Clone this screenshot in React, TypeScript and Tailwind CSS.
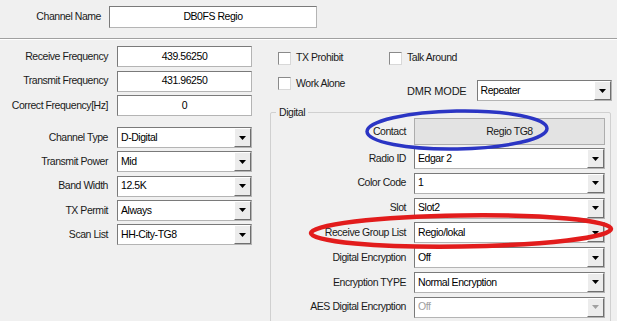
// Kanal-Editor (CPS) – DMR Kanaleinstellungen
const font = { fontFamily: '"Liberation Sans", Arial, sans-serif' }

function TextBox({ value, className = '' }: { value: string; className?: string }) {
  return (
    <div
      className={`h-[21px] bg-white border border-[#b4b4b4] border-t-[#7a7a7a] border-l-[#7a7a7a] flex items-center justify-center text-black ${className}`}
    >
      {value}
    </div>
  )
}

function Select({ value, disabled = false, className = '' }: { value: string; disabled?: boolean; className?: string }) {
  return (
    <div
      className={`h-[21px] bg-white border border-[#b4b4b4] border-t-[#7a7a7a] border-l-[#7a7a7a] flex items-stretch ${className}`}
    >
      <span className={`flex-1 flex items-center pl-[3px] ${disabled ? 'text-[#a0a0a0]' : 'text-black'}`}>{value}</span>
      <span className="w-[17px] bg-[#ececec] border-l border-t border-white border-r border-b border-r-[#6f6f6f] border-b-[#6f6f6f] flex items-center justify-center">
        <svg width="7" height="4" viewBox="0 0 7 4">
          <path d="M0 0h7L3.5 4z" fill={disabled ? '#a0a0a0' : '#000'} />
        </svg>
      </span>
    </div>
  )
}

function Check({ label, className = '' }: { label: string; className?: string }) {
  return (
    <div className={`flex items-center gap-[5px] ${className}`}>
      <span className="w-[13px] h-[13px] bg-white border border-[#8a8a8a] border-b-[#d8d8d8] border-r-[#d8d8d8]" />
      <span>{label}</span>
    </div>
  )
}

function Row({ label, children, labelW }: { label: string; children: React.ReactNode; labelW: string }) {
  return (
    <div className="flex items-center h-[21px]">
      <span className={`${labelW} text-right shrink-0`}>{label}</span>
      {children}
    </div>
  )
}

export default function App() {
  const left = [
    ['Channel Type', 'D-Digital'],
    ['Transmit Power', 'Mid'],
    ['Band Width', '12.5K'],
    ['TX Permit', 'Always'],
    ['Scan List', 'HH-City-TG8'],
  ]
  const digital: [string, string, boolean?][] = [
    ['Radio ID', 'Edgar 2'],
    ['Color Code', '1'],
    ['Slot', 'Slot2'],
    ['Receive Group List', 'Regio/lokal'],
    ['Digital Encryption', 'Off'],
    ['Encryption TYPE', 'Normal Encryption'],
    ['AES Digital Encryption', 'Off', true],
  ]

  return (
    <div
      style={font}
      className="relative w-[617px] h-[321px] overflow-hidden bg-[#f0f0f0] text-[10.5px] tracking-[-0.45px] text-[#1a1a1a] select-none"
    >
      {/* Kanalname */}
      <div className="h-[38px] flex pt-[6px]">
        <span className="w-[101px] h-[22px] text-right flex items-center justify-end shrink-0">Channel Name</span>
        <TextBox value="DB0FS Regio" className="ml-[8px] w-[208px] h-[22px]" />
      </div>
      <div className="border-t border-[#a0a0a0] border-b border-b-white" />

      <div className="flex">
        {/* linke Spalte */}
        <div className="w-[270px] shrink-0 pt-[6px] flex flex-col">
          <div className="flex flex-col gap-[3.5px]">
            <Row label="Receive Frequency" labelW="w-[108px]">
              <TextBox value="439.56250" className="ml-[9px] w-[135px]" />
            </Row>
            <Row label="Transmit Frequency" labelW="w-[108px]">
              <TextBox value="431.96250" className="ml-[9px] w-[135px]" />
            </Row>
            <Row label="Correct Frequency[Hz]" labelW="w-[108px]">
              <TextBox value="0" className="ml-[9px] w-[135px]" />
            </Row>
          </div>
          <div className="flex flex-col gap-[3.3px] mt-[11px]">
            {left.map(([l, v]) => (
              <Row key={l} label={l} labelW="w-[108px]">
                <Select value={v} className="ml-[9px] w-[135px]" />
              </Row>
            ))}
          </div>
        </div>

        {/* rechte Spalte */}
        <div className="flex-1 flex flex-col">
          <div className="flex mt-[11px] h-[14px]">
            <Check label="TX Prohibit" className="ml-[8px] w-[111px]" />
            <Check label="Talk Around" />
          </div>
          <div className="flex mt-[11px] h-[26px]">
            <Check label="Work Alone" className="ml-[8px] w-[111px] self-start" />
            <span className="ml-[18px] mt-[7px] text-[11px] tracking-[-0.2px]">DMR MODE</span>
            <Select value="Repeater" className="ml-[10px] mt-[4px] w-[135px]" />
          </div>

          {/* Digital Gruppe */}
          <div className="relative mt-[10px] w-[341px] h-[230px] border border-[#d0d0d0] rounded-[2px]">
            <span className="absolute -top-[7px] left-[5px] px-[3px] bg-[#f0f0f0] leading-[12px]">Digital</span>
            <div className="flex items-center mt-[5px] h-[27px]">
              <span className="w-[135px] text-right">Contact</span>
              <div className="ml-[8px] w-[191px] h-[27px] bg-[#e3e3e3] border border-[#adadad] flex items-center justify-center">
                Regio TG8
              </div>
            </div>
            <div className="flex flex-col gap-[3.8px] mt-[3px]">
              {digital.map(([l, v, d]) => (
                <Row key={l} label={l} labelW="w-[135px]">
                  <Select value={v} disabled={!!d} className="ml-[8px] w-[191px]" />
                </Row>
              ))}
            </div>
          </div>
        </div>
      </div>

      {/* Markierungen */}
      <svg className="absolute inset-0 pointer-events-none" width="617" height="321">
        <ellipse cx="457" cy="130" rx="90" ry="19" fill="none" stroke="#2b35c4" strokeWidth="3.5" transform="rotate(-1 457 130)" />
        <ellipse cx="461" cy="231" rx="150" ry="15.5" fill="none" stroke="#e21c1c" strokeWidth="4.5" transform="rotate(-0.8 461 231)" />
      </svg>
    </div>
  )
}
